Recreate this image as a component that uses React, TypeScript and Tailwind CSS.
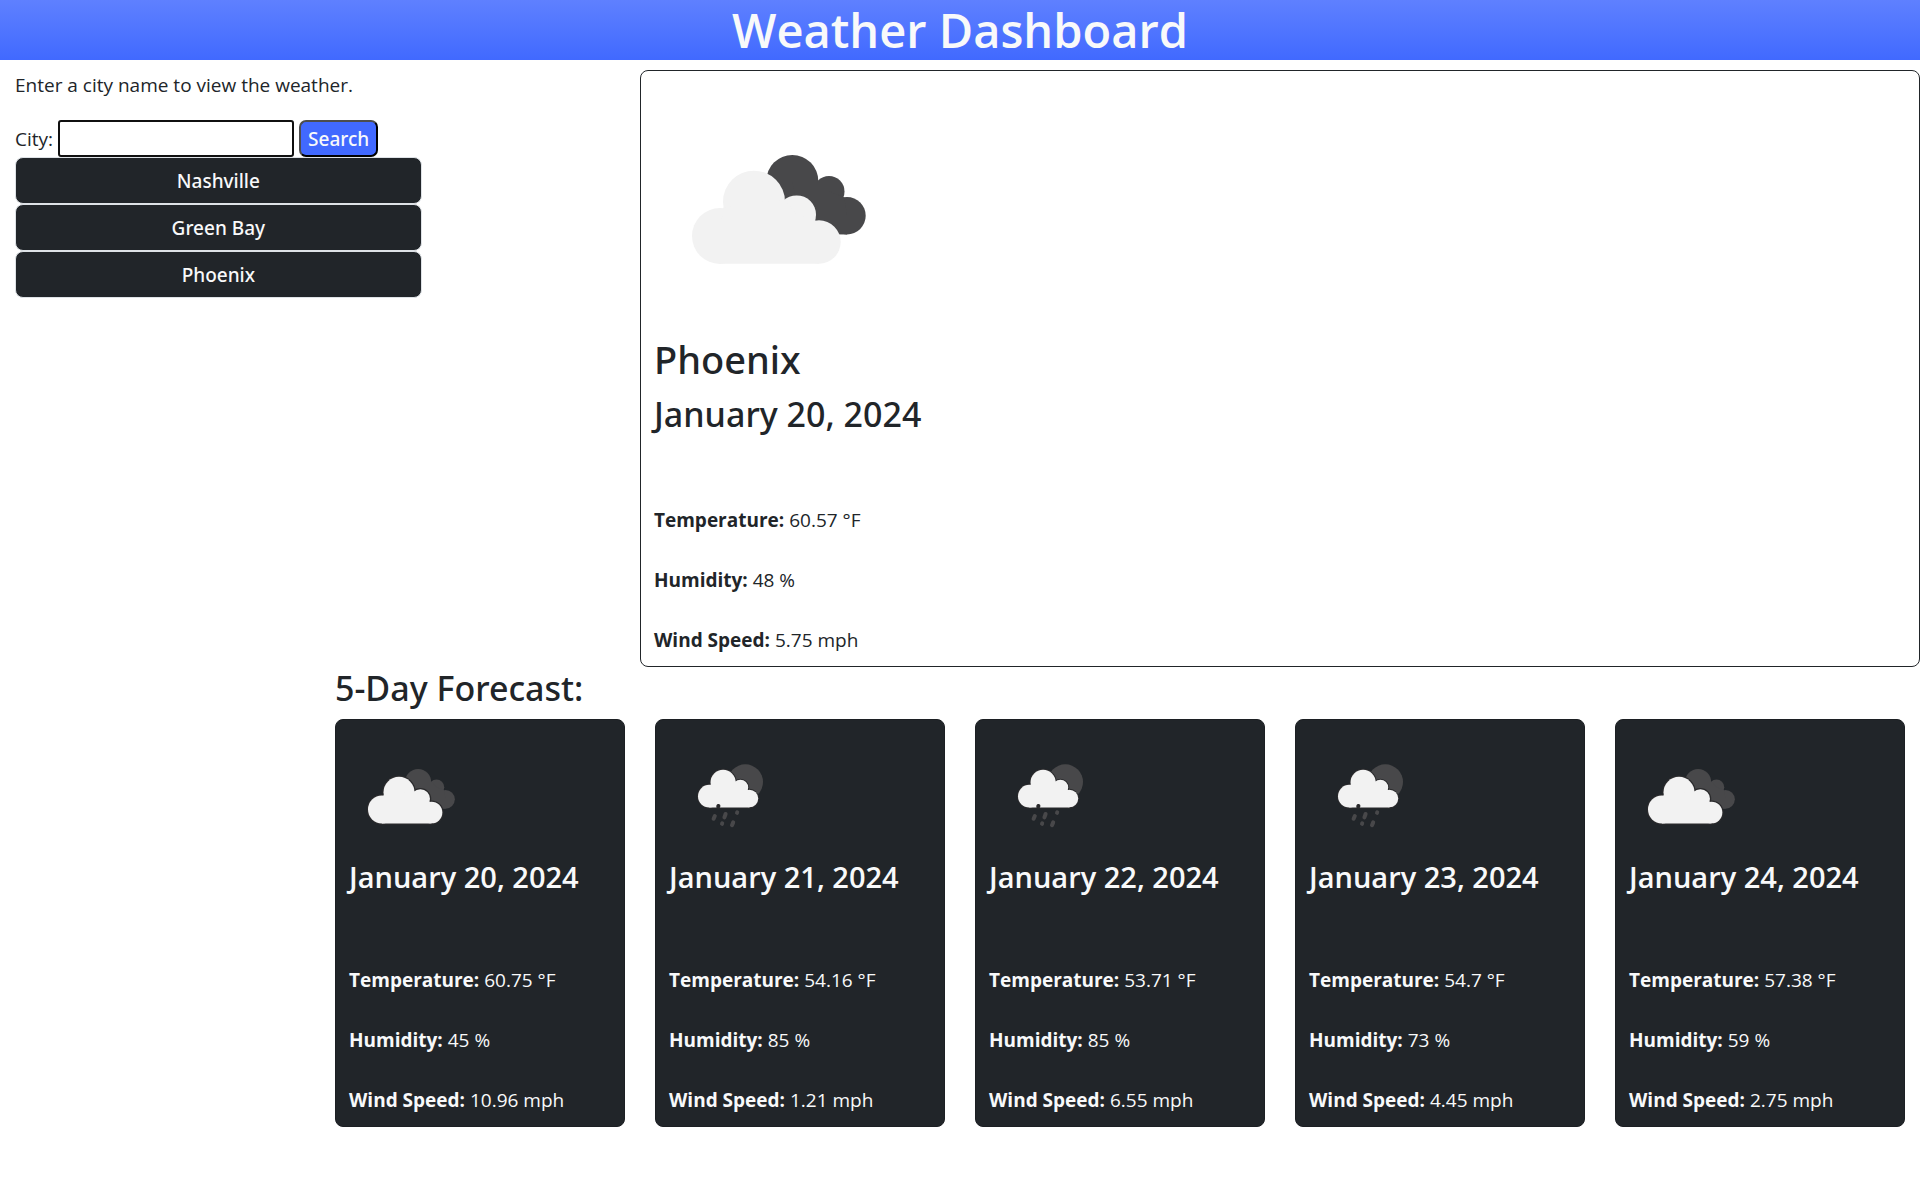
import { useState, type FormEvent } from "react";

type Sky = "clouds" | "rain";

interface Reading {
  sky: Sky;
  date: string;
  temperature: string;
  humidity: string;
  wind: string;
}

const current: Reading = { sky: "clouds", date: "January 20, 2024", temperature: "60.57 °F", humidity: "48 %", wind: "5.75 mph" };

const forecast: Reading[] = [
  { sky: "clouds", date: "January 20, 2024", temperature: "60.75 °F", humidity: "45 %", wind: "10.96 mph" },
  { sky: "rain", date: "January 21, 2024", temperature: "54.16 °F", humidity: "85 %", wind: "1.21 mph" },
  { sky: "rain", date: "January 22, 2024", temperature: "53.71 °F", humidity: "85 %", wind: "6.55 mph" },
  { sky: "rain", date: "January 23, 2024", temperature: "54.7 °F", humidity: "73 %", wind: "4.45 mph" },
  { sky: "clouds", date: "January 24, 2024", temperature: "57.38 °F", humidity: "59 %", wind: "2.75 mph" },
];

function FrontCloud() {
  return (
    <>
      <circle cx="66" cy="151" r="28" />
      <circle cx="100" cy="116.7" r="31" />
      <circle cx="142.7" cy="129.7" r="19.3" />
      <circle cx="165" cy="157" r="21.7" />
      <path d="M66 178.8 L66 151 L69 122.7 L100 117 L131 115 L143 130 L161.5 135.5 L165 157 L165 178.8z" />
    </>
  );
}

function CloudsIcon({ className, outlined }: { className: string; outlined: boolean }) {
  return (
    <svg viewBox="0 0 250 250" className={className} role="img" aria-label="Broken clouds">
      <g fill="#48484a">
        <circle cx="138.3" cy="96" r="26" />
        <circle cx="175" cy="106.5" r="15.5" />
        <circle cx="193" cy="130.7" r="18.7" />
        <path d="M138 96 L164 96 L175 106 L190.3 112.5 L193 130 L193 149.4 L150 149z" />
      </g>
      {outlined && (
        <g fill="#2a2a2c" stroke="#2a2a2c" strokeWidth="5">
          <FrontCloud />
        </g>
      )}
      <g fill="#f2f2f2">
        <FrontCloud />
      </g>
    </svg>
  );
}

function RainIcon({ className }: { className: string }) {
  return (
    <svg viewBox="0 0 125 125" className={className} role="img" aria-label="Rain">
      <circle cx="76.3" cy="48" r="17.7" fill="#48484a" />
      <g fill="#2a2a2c" stroke="#2a2a2c" strokeWidth="5" transform="translate(13.6 1) scale(0.405)">
        <FrontCloud />
      </g>
      <g fill="#f2f2f2" transform="translate(13.6 1) scale(0.405)">
        <FrontCloud />
      </g>
      <g stroke="#48484a" strokeWidth="4" strokeLinecap="round">
        <path d="M49.4 72 L49.2 72.6" stroke="#2a2a2c" />
        <path d="M45.8 82 L44.6 84.8" />
        <path d="M56.6 80 L55.4 83.4" />
        <path d="M68.2 78.4 L68 78.8" />
        <path d="M53.2 89.4 L53 89.8" />
        <path d="M64.2 88.4 L63 91.2" />
      </g>
    </svg>
  );
}

function SkyIcon({ sky, className, outlined = false }: { sky: Sky; className: string; outlined?: boolean }) {
  return sky === "clouds" ? <CloudsIcon className={className} outlined={outlined} /> : <RainIcon className={className} />;
}

function Measures({ reading }: { reading: Reading }) {
  return (
    <div className="mt-[70px] flex flex-col gap-[30px] leading-[30px]">
      <p><strong className="font-bold">Temperature:</strong> {reading.temperature}</p>
      <p><strong className="font-bold">Humidity:</strong> {reading.humidity}</p>
      <p><strong className="font-bold">Wind Speed:</strong> {reading.wind}</p>
    </div>
  );
}

export default function App() {
  const [city, setCity] = useState("");
  const [history, setHistory] = useState(["Nashville", "Green Bay", "Phoenix"]);

  const search = (event: FormEvent) => {
    event.preventDefault();
    if (city.trim()) setHistory([...history, city.trim()]);
    setCity("");
  };

  return (
    <div className="min-h-screen bg-white font-['Open_Sans','Noto_Sans',sans-serif] text-[19px] leading-[30px] text-[#212529]">
      <header className="bg-linear-to-b from-[#5f80ff] to-[#4169ff] text-center text-[#f8f9fa]">
        <h1 className="text-[47px] leading-[60px] font-semibold">Weather Dashboard</h1>
      </header>

      <div className="mt-[10px] flex">
        <aside className="w-1/3 px-[15px]">
          <p>Enter a city name to view the weather.</p>
          <form onSubmit={search} className="mt-5 flex items-center gap-[5px]">
            <label htmlFor="city">City:</label>
            <input
              id="city"
              type="text"
              value={city}
              onChange={(event) => setCity(event.target.value)}
              className="h-[37px] w-[236px] rounded-[3px] border-2 border-[#101010] bg-white px-1 outline-none"
            />
            <button type="submit" className="h-[37px] rounded-[7px] border-2 border-t-[#4d4d4d] border-r-black border-b-black border-l-[#4d4d4d] bg-[#4169ff] px-[7px] font-['Noto_Sans','Open_Sans',sans-serif] leading-[30px] font-medium text-[#f8f9fa]">
              Search
            </button>
          </form>
          <ul className="w-2/3">
            {history.map((name) => (
              <li key={name}>
                <button type="button" className="h-[47px] w-full rounded-[8px] border border-[#dee2e6] bg-[#212529] font-['Noto_Sans','Open_Sans',sans-serif] font-medium text-[#f8f9fa]">
                  {name}
                </button>
              </li>
            ))}
          </ul>
        </aside>

        <section className="w-2/3 rounded-[8px] border border-[#212529] px-[13px] pt-[14px] pb-[11px]">
          <SkyIcon sky={current.sky} className="size-[250px]" />
          <h2 className="font-['Noto_Sans','Open_Sans',sans-serif] text-[38px] leading-[48px] font-medium">Phoenix</h2>
          <h3 className="mt-[10px] font-['Noto_Sans','Open_Sans',sans-serif] text-[34px] leading-[42px] font-medium">{current.date}</h3>
          <Measures reading={current} />
        </section>
      </div>

      <section className="ml-auto w-5/6 px-[15px]">
        <h3 className="font-['Noto_Sans','Open_Sans',sans-serif] text-[34px] leading-[42px] font-medium">5-Day Forecast:</h3>
        <div className="mt-[10px] grid grid-cols-5 gap-[30px]">
          {forecast.map((day) => (
            <article key={day.date} className="rounded-[8px] border border-[#1c1f23] bg-[#212529] px-[13px] pt-[14px] pb-[11px] text-[#f8f9fa]">
              <SkyIcon sky={day.sky} className="size-[125px]" outlined />
              <h4 className="text-[29px] leading-[36px] font-semibold">{day.date}</h4>
              <Measures reading={day} />
            </article>
          ))}
        </div>
      </section>
    </div>
  );
}
